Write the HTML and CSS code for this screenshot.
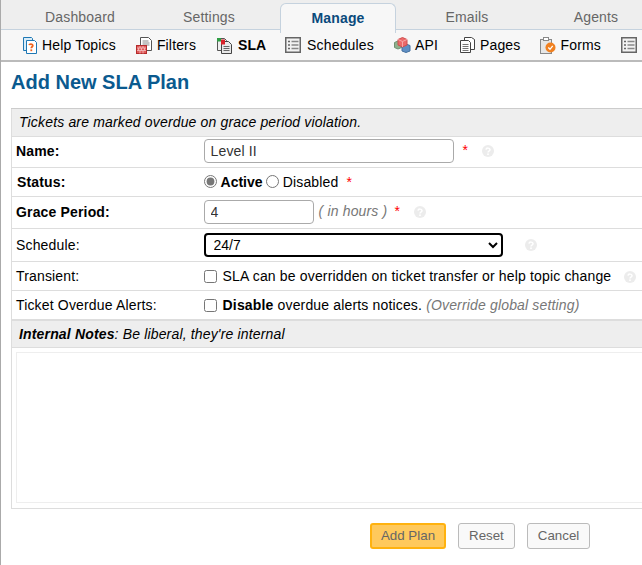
FILE: index.html
```html
<!DOCTYPE html>
<html lang="en">
<head>
  <meta charset="UTF-8">
  <title>Add New SLA Plan</title>
  <link rel="stylesheet" href="styles.css">
</head>
<body>
  <div class="page">
    <ul class="tabs">
      <li>Dashboard</li>
      <li>Settings</li>
      <li class="active">Manage</li>
      <li>Emails</li>
      <li>Agents</li>
    </ul>
    <ul class="subnav">
      <li>
        <svg class="icon" width="16" height="17" viewBox="0 0 16 17">
          <path d="M1.5.5h8l1 1v12h-9z" fill="#d8ecf8" stroke="#1f78b4"/>
          <path d="M4.5 3.5h8l2 2v11h-10z" fill="#fff" stroke="#1f78b4"/>
          <path d="M7.2 8.2c.2-1.500 3.600-1.500 3.600.4 0 1.200-1.500 1.200-1.500 2.600" fill="none" stroke="#f0641e" stroke-width="1.800"/>
          <rect x="8.400" y="12.400" width="1.800" height="1.800" fill="#f0641e"/>
        </svg>
        Help Topics
      </li>
      <li>
        <svg class="icon" width="17" height="17" viewBox="0 0 17 17">
          <path d="M4.500.5h8l3 3v10h-11z" fill="#fff" stroke="#555"/>
          <path d="M6.500 4h6M6.500 6h7M6.500 8h7" stroke="#888"/>
          <rect x=".5" y="8.500" width="10" height="8" fill="#e05a5a" stroke="#b52b2b"/>
          <path d="M1 11h9M1 13.500h9M4 9v2M7 9v2M2.500 11v2.500M5.500 11v2.500M8.500 11v2.500M4 13.500v3M7 13.500v3" stroke="#f5c0c0" stroke-width=".8"/>
        </svg>
        Filters
      </li>
      <li class="current">
        <svg class="icon icon-wide" width="17" height="17" viewBox="0 0 17 17">
          <path d="M1.500 1.500h7l2 2v10h-9z" fill="#eee" stroke="#555"/>
          <path d="M5.500 4.500h7l3 3v9h-10z" fill="#e8e8e8" stroke="#444"/>
          <path d="M7.500 9.500h6M7.500 11.500h6M7.500 13.500h6" stroke="#666"/>
          <rect x="1" y="1" width="4" height="3.500" fill="#2f9e44"/>
          <rect x="5" y="2.500" width="4" height="5" fill="#d9222a"/>
        </svg>
        SLA
      </li>
      <li>
        <svg class="icon icon-wider" width="16" height="16" viewBox="0 0 16 16">
          <rect x=".75" y=".75" width="14.500" height="14.500" fill="#f2f2f2" stroke="#666" stroke-width="1.500"/>
          <path d="M3 4.500h2M3 8h2M3 11.500h2" stroke="#666" stroke-width="1.500"/>
          <path d="M6.500 4.500h7M6.500 8h7M6.500 11.500h7" stroke="#888" stroke-width="1.500"/>
        </svg>
        Schedules
      </li>
      <li class="tight">
        <svg class="icon" width="17" height="16" viewBox="0 0 17 16">
          <path d="M.5 5.500l3.500-1.500 3.500 1.500v5l-3.500 1.500-3.500-1.500z" fill="#8fb08c" stroke="#6f9070"/>
          <path d="M8 8.500l4-1.500 4 1.500v5.500l-4 1.500-4-1.500z" fill="#5f8fc4" stroke="#44709f"/>
          <path d="M4 2.500l4.500-2 4.500 2v5.500l-4.500 2-4.500-2z" fill="#ec6a6a" stroke="#cf4e4e"/>
          <path d="M4 2.500l4.500 2 4.500-2M8.500 4.500v5.500" fill="none" stroke="#f7a8a8"/>
        </svg>
        API
      </li>
      <li>
        <svg class="icon icon-wide" width="15" height="16" viewBox="0 0 15 16">
          <path d="M4.500.5h7l3 2v10h-10z" fill="#fff" stroke="#444"/>
          <path d="M.5 3.500h8l2 2v10h-10z" fill="#fff" stroke="#444"/>
          <path d="M2.500 7.500h6M2.500 9.500h6M2.500 11.500h6M2.500 13.500h6" stroke="#777"/>
        </svg>
        Pages
      </li>
      <li>
        <svg class="icon" width="16" height="17" viewBox="0 0 16 17">
          <rect x=".5" y="2.500" width="11" height="14" fill="#e6e6e6" stroke="#888"/>
          <rect x="3.500" y=".5" width="5" height="3" fill="#fff" stroke="#888"/>
          <circle cx="10.500" cy="10.500" r="5" fill="#f08020"/>
          <path d="M8.300 10.500l1.700 1.800 2.700-3.400" fill="none" stroke="#fff" stroke-width="1.300"/>
        </svg>
        Forms
      </li>
      <li>
        <svg class="icon" width="16" height="16" viewBox="0 0 16 16">
          <rect x=".75" y=".75" width="14.500" height="14.500" fill="#f2f2f2" stroke="#666" stroke-width="1.500"/>
          <path d="M3 4.500h2M3 8h2M3 11.500h2" stroke="#666" stroke-width="1.500"/>
          <path d="M6.500 4.500h7M6.500 8h7M6.500 11.500h7" stroke="#888" stroke-width="1.500"/>
        </svg>
      </li>
    </ul>

    <h2 class="title">Add New SLA Plan</h2>

    <form class="plan-form">
      <table class="form-table">
        <colgroup>
          <col class="label-col">
          <col>
        </colgroup>
        <thead>
          <tr class="row-head">
            <th colspan="2"><em>Tickets are marked overdue on grace period violation.</em></th>
          </tr>
        </thead>
        <tbody>
          <tr class="row-name">
            <td><b>Name:</b></td>
            <td>
              <input class="text-input name-input" type="text" value="Level II">
              <span class="req req-name">*</span>
              <svg class="help help-name" width="12" height="12" viewBox="0 0 12 12"><use href="#help"/></svg>
            </td>
          </tr>
          <tr class="row-status">
            <td><b class="status-label">Status:</b></td>
            <td>
              <label class="radio"><input type="radio" name="status" checked> <b>Active</b></label>
              <label class="radio radio-off"><input type="radio" name="status"> Disabled</label>
              <span class="req req-status">*</span>
            </td>
          </tr>
          <tr class="row-grace">
            <td><b>Grace Period:</b></td>
            <td>
              <input class="text-input grace-input" type="text" value="4">
              <em class="hint hint-hours">( in hours )</em>
              <span class="req req-grace">*</span>
              <svg class="help help-grace" width="12" height="12" viewBox="0 0 12 12"><use href="#help"/></svg>
            </td>
          </tr>
          <tr class="row-schedule">
            <td>Schedule:</td>
            <td>
              <select class="schedule-select"><option>24/7</option></select>
              <svg class="help help-schedule" width="12" height="12" viewBox="0 0 12 12"><use href="#help"/></svg>
            </td>
          </tr>
          <tr class="row-check">
            <td>Transient:</td>
            <td>
              <label class="check"><input type="checkbox"> SLA can be overridden on ticket transfer or help topic change</label>
              <svg class="help help-transient" width="12" height="12" viewBox="0 0 12 12"><use href="#help"/></svg>
            </td>
          </tr>
          <tr class="row-check">
            <td>Ticket Overdue Alerts:</td>
            <td>
              <label class="check"><input type="checkbox"> <b>Disable</b> overdue alerts notices.</label>
              <em class="hint">(Override global setting)</em>
            </td>
          </tr>
          <tr class="row-head row-notes">
            <th colspan="2"><em><b>Internal Notes</b>: Be liberal, they're internal</em></th>
          </tr>
          <tr>
            <td colspan="2" class="notes-cell"><div class="notes-box"></div></td>
          </tr>
        </tbody>
      </table>

      <div class="actions">
        <button type="button" class="btn btn-primary">Add Plan</button>
        <button type="button" class="btn">Reset</button>
        <button type="button" class="btn">Cancel</button>
      </div>
    </form>
  </div>

  <svg width="0" height="0" class="defs">
    <symbol id="help" viewBox="0 0 12 12">
      <circle cx="6" cy="6" r="6" fill="#ececec"/>
      <path d="M4 4.600c.2-2 4-2 4 .2 0 1.400-2 1.300-2 2.600" fill="none" stroke="#fff" stroke-width="1.500"/>
      <rect x="5.200" y="8.400" width="1.600" height="1.600" fill="#fff"/>
    </symbol>
  </svg>
</body>
</html>
```

FILE: styles.css
```css
html, body {
  margin: 0;
  padding: 0;
  overflow: hidden;
  background-color: white;
}
body {
  font-family: "Liberation Sans", Arial, sans-serif;
  font-size: 14px;
  letter-spacing: .16px;
  color: #000;
}
.page {
  width: 700px;
  height: 565px;
  border-left: 1px solid #aaa;
}
.defs {
  position: absolute;
}

/* top tabs */
.tabs {
  display: flex;
  gap: 13px;
  height: 29px;
  margin: 0;
  padding: 0 0 0 21px;
  list-style: none;
  background-color: #eee;
  border-bottom: 1px solid #c5d2de;
}
.tabs li {
  width: 116px;
  padding-top: 9px;
  box-sizing: border-box;
  height: 29px;
  text-align: center;
  color: #666;
}
.tabs .active {
  height: 30px;
  margin-top: 3px;
  padding-top: 6px;
  font-weight: bold;
  color: #0a4a7c;
  background-color: #f7f7f7;
  border: 1px solid #c5d2de;
  border-bottom: none;
  border-radius: 6px 6px 0 0;
}

/* sub navigation */
.subnav {
  display: flex;
  align-items: center;
  height: 30px;
  margin: 0;
  padding: 0 0 0 21px;
  list-style: none;
  background-color: #f7f7f7;
  border-bottom: 2px solid #bbb;
  color: #000;
}
.subnav li {
  display: flex;
  align-items: center;
  gap: 4px;
  margin-right: 20px;
  white-space: nowrap;
}
.subnav .current {
  margin-right: 19px;
  font-weight: bold;
  letter-spacing: 0;
}
.subnav .tight {
  margin-right: 22px;
}
.icon {
  flex: none;
}
.icon-wide {
  margin-right: 1px;
}
.icon-wider {
  margin-right: 2px;
}

.title {
  margin: 9px 0 0 10px;
  height: 37px;
  font-size: 20px;
  line-height: 23px;
  letter-spacing: 0;
  color: #0a5a8f;
}

/* form table */
.form-table {
  width: 680px;
  margin-left: 10px;
  table-layout: fixed;
  border-collapse: collapse;
  border: 1px solid #ddd;
}
.label-col {
  width: 192px;
}
.form-table td {
  box-sizing: border-box;
  padding: 0 0 0 4px;
  border-bottom: 1px solid #ddd;
  white-space: nowrap;
}
.form-table td + td {
  padding-left: 0;
}
.status-label {
  margin-left: 1px;
}
.row-head th {
  height: 26px;
  padding: 0 0 1px 7px;
  font-weight: normal;
  text-align: left;
  background-color: #eee;
  border-top: 1px solid #ccc;
  border-bottom: 1px solid #ddd;
}
.row-name td { height: 31px; padding-bottom: 2px; }
.row-status td { height: 29px; }
.row-grace td { height: 32px; padding-bottom: 1px; }
.row-schedule td { height: 33px; }
.row-check td { height: 29px; }
.row-head.row-notes th {
  border-top: 2px solid #ddd;
  padding-bottom: 0;
}
.form-table .notes-cell {
  padding: 4px 0 5px 4px;
  border-bottom: none;
}
.notes-box {
  height: 149px;
  border: 1px solid #eee;
}

.text-input {
  box-sizing: border-box;
  height: 24px;
  padding: 0 6px;
  font: 14px "Liberation Sans", Arial, sans-serif;
  letter-spacing: .16px;
  color: #333;
  border: 1px solid #aaa;
  border-radius: 4px;
  vertical-align: middle;
}
.name-input { width: 250px; }
.grace-input { width: 110px; }
.req {
  color: #f00;
}
.req-name { margin-left: 5px; }
.req-status { margin-left: 4px; }
.req-grace { margin-left: 3px; }
.help {
  vertical-align: middle;
}
.help-name { margin-left: 10px; }
.help-grace { margin-left: 10px; }
.help-schedule { margin-left: 18px; }
.help-transient { margin-left: 9px; }
.hint {
  color: #777;
}
.hint-hours {
  margin-left: 1px;
}
.radio b {
  letter-spacing: 0;
}
.radio-off {
  margin-left: -1px;
}
.radio input {
  margin: 0;
  vertical-align: -1px;
  accent-color: #777;
}
.check input {
  margin: 0 2px 0 0;
  vertical-align: -2px;
}
.schedule-select {
  box-sizing: border-box;
  width: 299px;
  height: 24px;
  padding: 0 4px;
  font: 14px "Liberation Sans", Arial, sans-serif;
  color: #000;
  background-color: white;
  border: 2px solid #000;
  border-radius: 4px;
  vertical-align: middle;
}

/* buttons */
.actions {
  display: flex;
  gap: 12px;
  margin: 14px 0 0 369px;
}
.btn {
  box-sizing: border-box;
  height: 26px;
  padding: 0 10px;
  font: 13.33px "Liberation Sans", Arial, sans-serif;
  color: #666;
  white-space: nowrap;
  background-color: #f9f9f9;
  border: 1px solid #bbb;
  border-radius: 3px;
}
.btn-primary {
  width: 76px;
  padding: 0;
  background-color: #ffc95c;
  border: 2px solid #ffb20f;
}
```
